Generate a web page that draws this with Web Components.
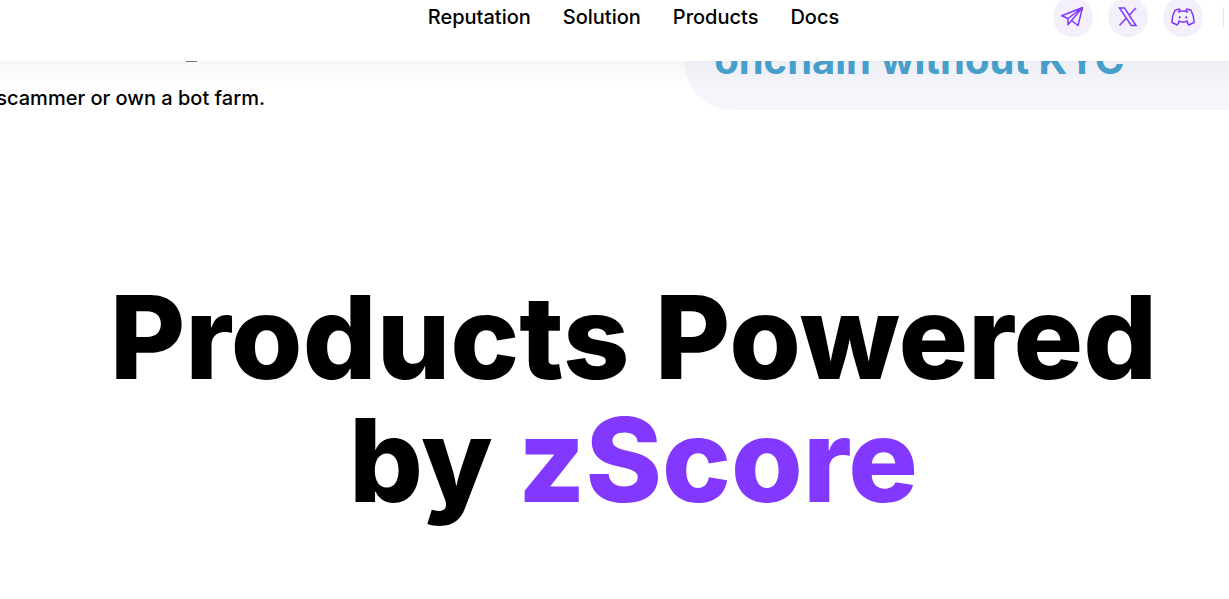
<!DOCTYPE html>
<html lang="en">
<head>
<meta charset="utf-8">
<title>zScore</title>
<style>
body { margin: 0; background: #fff; color: #000; font-family: Inter, "Liberation Sans", sans-serif; overflow-x: hidden; }
</style>
</head>
<body>
<z-page>
  <z-header slot="header">
    <z-link href="#reputation">Reputation</z-link>
    <z-link href="#solution">Solution</z-link>
    <z-link href="#products">Products</z-link>
    <z-link href="#docs">Docs</z-link>
    <z-social slot="social" label="Telegram"><svg width="24" height="24" viewBox="0 0 24 24" fill="none" stroke="currentColor" stroke-width="1.5" stroke-linejoin="round" stroke-linecap="round"><path d="M.8 10.800 21.500 2.500 17 20.500 10.500 15.500 7 19.800V13.500Z M21.500 2.500 7 13.500 .8 10.800M21.500 2.500 10.500 15.500"/></svg></z-social>
    <z-social slot="social" label="X"><svg width="24" height="24" viewBox="0 0 24 24" fill="none" stroke="currentColor" stroke-width="1.500" stroke-linejoin="miter"><path d="M3.500 3H8.500L20 20.500H15.200ZM20 3 12.800 10.600M10.800 12.500 3.500 20.500"/></svg></z-social>
    <z-social slot="social" label="Discord"><svg width="24" height="24" viewBox="0 0 24 24" fill="none" stroke="currentColor" stroke-width="1.500" stroke-linejoin="round" stroke-linecap="round"><path d="M7.500 7C10 6 14 6 16.500 7M7.500 16C10 17.200 14 17.200 16.500 16M9 6.200 8.300 4 4 5.300C2 9 .8 13 1 17.500L6.200 20 8 17M15 6.200 15.700 4 20 5.300C22 9 23.200 13 23 17.500L17.800 20 16 17"/><path stroke-width="2.200" d="M8.700 12.300h.1M15.200 12.300h.1"/></svg></z-social>
  </z-header>
  <z-intro>
    <span>scammer or own a bot farm.</span>
    <span slot="card">onchain without KYC</span>
  </z-intro>
  <z-title>Products Powered<br>by <z-accent>zScore</z-accent></z-title>
</z-page>
<script>
const define = (name, html, setup) => customElements.define(name, class extends HTMLElement {
  constructor() {
    super();
    const t = document.createElement('template');
    t.innerHTML = html;
    this.attachShadow({ mode: 'open' }).append(t.content.cloneNode(true));
  }
  connectedCallback() { if (setup) setup(this, this.shadowRoot); }
});

define('z-page', `<style>
  :host { display: block; overflow: hidden; }
  .canvas { margin-right: -38px; }
</style><div class="canvas"><slot name="header"></slot><main><slot></slot></main></div>`);

define('z-header', `<style>
  :host { display: block; position: relative; z-index: 1; background: #fff; margin-top: -27px; }
  :host::after { content: ""; position: absolute; top: 100%; left: 0; right: 0; height: 28px; background: linear-gradient(rgba(0,0,0,.03), transparent); pointer-events: none; }
  header { display: grid; grid-template-columns: 1fr auto 1fr; align-items: center; padding: 24px 0; }
  nav { grid-column: 2; display: flex; gap: 32px; }
  .side { display: flex; justify-content: flex-end; align-items: center; gap: 15px; padding-right: 43px; }
  .rule { width: 1px; height: 20px; background: #e8e8ec; margin-left: 5px; }
</style><header><nav><slot></slot></nav><div class="side"><slot name="social"></slot><div class="rule"></div></div></header>`);

define('z-link', `<style>
  :host { display: block; }
  a { color: inherit; text-decoration: none; font-size: 20px; line-height: 24px; font-weight: 500; white-space: nowrap; }
</style><a><slot></slot></a>`, (el, root) => { root.querySelector('a').href = el.getAttribute('href'); });

define('z-social', `<style>
  :host { display: block; }
  a { display: grid; place-items: center; width: 40px; height: 40px; border-radius: 50%; background: #f4f0fb; color: #8338ff; }
</style><a href="#"><slot></slot></a>`, (el, root) => { root.querySelector('a').setAttribute('aria-label', el.getAttribute('label')); });

define('z-intro', `<style>
  :host { display: grid; grid-template-columns: 54% 46%; height: 49px; }
  .copy { width: 265px; font-size: 20px; line-height: 24px; font-weight: 500; white-space: nowrap; }
  .copy::before { content: ""; display: block; width: 11px; height: 1px; margin: 0 0 24px 186px; background: #777; }
  p { margin: 0; display: flex; justify-content: flex-end; }
  .card { background: #f5f6fc; border-radius: 0 0 0 50px; padding-left: 30px; }
  h2 { margin: -25px 0 0; font-size: 40px; line-height: 48px; font-weight: 700; color: #48a2d0; white-space: nowrap; }
</style><div class="copy"><p><slot></slot></p></div><div class="card"><h2><slot name="card"></slot></h2></div>`);

define('z-title', `<style>
  :host { display: block; padding: 166px 0 64px; }
  h1 { margin: 0; text-align: center; font-size: 116px; line-height: 123px; font-weight: 800; white-space: nowrap; }
</style><h1><slot></slot></h1>`);

define('z-accent', `<style>:host { display: inline; color: #8338ff; }</style><slot></slot>`);
</script>
</body>
</html>
